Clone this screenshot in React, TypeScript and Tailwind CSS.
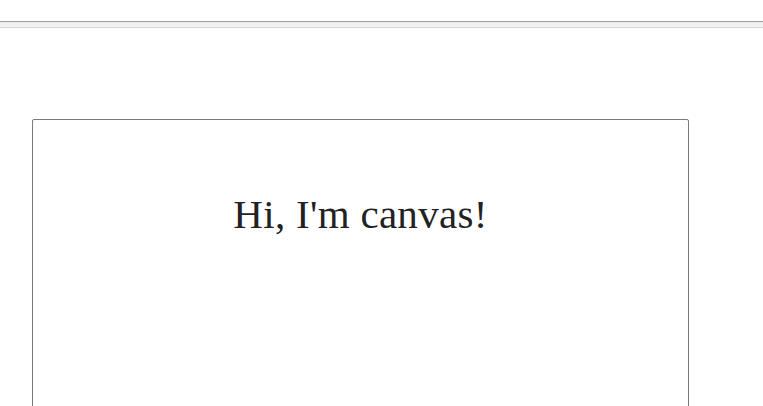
export default function App() {
  return (
    <div className="w-[763px] h-[406px] overflow-hidden bg-white" style={{ fontFamily: '"Liberation Serif", serif' }}>
      <div className="pt-[21px]">
        <div className="h-[7px] border-t border-t-[#a0a0a0] border-b border-b-[#d4d4d4] bg-gradient-to-b from-[#ececec] to-[#f6f6f6]" />
      </div>
      <div className="pl-[32px] pt-[91px]">
        <div className="w-[657px] h-[320px] border border-[#7a7a7a] rounded-[2px] flex justify-center pt-[70px]">
          <span className="text-[41px] leading-[48px] tracking-[0.3px] text-[#222] font-normal h-fit">Hi, I'm canvas!</span>
        </div>
      </div>
    </div>
  );
}
